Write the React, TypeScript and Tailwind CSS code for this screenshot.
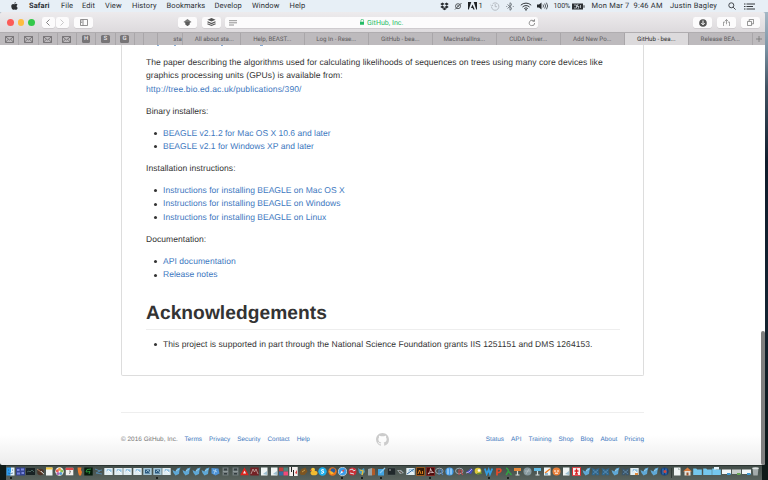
import React from "react";

const SANS = "font-['Liberation_Sans',Arial,sans-serif]";
const SYS = "font-[Roboto,'Liberation_Sans',sans-serif]";

function Apple() {
  return (
    <svg viewBox="0 0 16 18" className="h-[8px] w-[7px]" fill="#2c2f33">
      <path d="M11 0c.1 2-1.500 3.700-3.300 3.700C7.500 2 9.200.2 11 0zM8 5c.8 0 1.800-.9 3.500-.9 1.400 0 2.700.8 3.400 1.900-3 1.700-2.500 5.700.5 6.900-.7 2-2.300 4.800-4 4.800-1.200 0-1.600-.7-3-.7s-1.900.7-3 .7C3.300 17.700.6 13.500.6 9.600c0-3.600 2.300-5.400 4.400-5.400C6.400 4.200 7.400 5 8 5z" />
    </svg>
  );
}

const menus: [string, string][] = [
  ["Safari", "w-[32px] font-bold"],
  ["File", "w-[21px]"],
  ["Edit", "w-[23px]"],
  ["View", "w-[27px]"],
  ["History", "w-[34.500px]"],
  ["Bookmarks", "w-[48px]"],
  ["Develop", "w-[37.500px]"],
  ["Window", "w-[37.500px]"],
  ["Help", "w-[20px]"],
];

function MenuBar() {
  return (
    <div className={`flex h-[12px] w-[768px] shrink-0 items-center bg-[#e7eff6] text-[7.500px] leading-[12px] text-[#2c3035] ${SYS}`}>
      <div className="flex w-[29px] shrink-0 pl-[11px]"><Apple /></div>
      {menus.map(([t, c]) => <span key={t} className={`shrink-0 whitespace-nowrap tracking-[0.1px] ${c}`}>{t}</span>)}
      <div className="ml-auto flex shrink-0 items-center whitespace-nowrap">
        <svg viewBox="0 0 9 9" className="w-[9px]" fill="#25292d"><path d="M2.500.5L4.500 2 2.200 3.500.3 2zM6.500.5L8.700 2 6.800 3.500 4.500 2zM.3 5l1.900-1.500L4.500 5 2.500 6.400zM4.500 5l2.300-1.500L8.700 5 6.500 6.400zM2.500 7l2-1.400 2 1.400-2 1.300z" /></svg>
        <svg viewBox="0 0 8 8" className="ml-[5px] w-[8px]" fill="none" stroke="#33373b" strokeWidth=".8"><circle cx="4" cy="4.200" r="2.500" /><path d="M1 7.500L7.500 1M3 4h2" /></svg>
        <svg viewBox="0 0 9 8" className="ml-[6px] w-[9px]" fill="#1e2124"><path d="M0 0h3.300L.8 7.500H0zM5.700 0H9v7.500h-.8zM4.500 2.500l2.200 5H5.300l-.7-1.600H3z" /></svg>
        <span className="ml-[2px] w-[5px]">1</span>
        <svg viewBox="0 0 10 9" className="ml-[6px] w-[10px]" fill="none" stroke="#a9afb5" strokeWidth=".8"><path d="M1.500 5a3.700 3.700 0 1 0 1-3M.5 3l1.300 1.200L3 3M5.200 2v2.700h1.800" /></svg>
        <svg viewBox="0 0 8 9" className="ml-[6px] w-[8px]" fill="none" stroke="#5e666d" strokeWidth=".8"><path d="M1.500 2.500l4.500 4L4 8.300V.7L6 2.500l-4.500 4M.3 4.500h.9M6.800 4.500h.9" /></svg>
        <svg viewBox="0 0 12 9" className="ml-[6px] w-[12px]" fill="none" stroke="#34383c" strokeWidth="1"><path d="M.8 3.200a7.500 7.500 0 0 1 10.400 0M2.500 5a5 5 0 0 1 7 0M4.200 6.600a2.600 2.600 0 0 1 3.600 0" /><circle cx="6" cy="7.800" r=".5" /></svg>
        <svg viewBox="0 0 12 8" className="ml-[5px] w-[12px]"><path d="M0 2.500h2L4.500.5v7L2 5.500H0z" fill="#24282c" /><path d="M6 2.500q1 1.500 0 3M7.700 1.500q1.800 2.500 0 5M9.400.7q2.600 3.300 0 6.600" stroke="#30353a" fill="none" strokeWidth=".8" /></svg>
        <span className="ml-[5px] w-[17px] text-[7px] tracking-[-0.1px]">100%</span>
        <svg viewBox="0 0 13 7" className="ml-[1px] w-[13px]"><path d="M0 .5h11v6H0zM11.500 2.300h1v2.400h-1z" fill="#2c3034" /><path d="M2 2h2.500v3H2M6 1l-.8 2.500H7L6 6M8.500 2v3" stroke="#e7eff6" strokeWidth=".7" fill="none" /></svg>
        <span className="ml-[7px] w-[78.500px] tracking-[0.200px]">Mon Mar 7&nbsp; 9:46 AM</span>
        <span className="w-[49px] tracking-[0.180px]">Justin Bagley</span>
        <svg viewBox="0 0 8 8" className="ml-[9px] w-[8px]" fill="none" stroke="#33373b" strokeWidth=".9"><circle cx="3.300" cy="3.300" r="2.500" /><path d="M5.200 5.200L7.600 7.600" /></svg>
        <svg viewBox="0 0 11 7" className="ml-[8px] mr-[13px] w-[11px]" stroke="#34383d"><path d="M0 1h1.500M2.500 1H11M0 3.500h1.500M2.500 3.500H9M0 6h1.500M2.500 6H11" /></svg>
      </div>
    </div>
  );
}

function Btn({ c, children }: { c: string; children?: React.ReactNode }) {
  return <div className={`flex h-[11px] shrink-0 items-center justify-center rounded-[2px] bg-[#fcfbfc] shadow-[0_0.5px_0.5px_#bdbabd] ${c}`}>{children}</div>;
}

function Toolbar() {
  return (
    <div className="flex h-[20px] shrink-0 items-center bg-gradient-to-b from-[#edebed] to-[#dddadd] pt-[1px]">
      <div className="ml-[7px] size-[6.500px] rounded-full bg-[#fc5b57]" />
      <div className="ml-[4px] size-[6.500px] rounded-full bg-[#fdbc40]" />
      <div className="ml-[4px] size-[6.500px] rounded-full bg-[#34c84a]" />
      <Btn c="ml-[7px] w-[13px]"><svg viewBox="0 0 4 7" className="w-[4px]" fill="none" stroke="#666" strokeWidth=".8"><path d="M3.500.5l-3 3 3 3" /></svg></Btn>
      <Btn c="ml-[1px] w-[13px]"><svg viewBox="0 0 4 7" className="w-[4px]" fill="none" stroke="#bbb" strokeWidth=".8"><path d="M.5.5l3 3-3 3" /></svg></Btn>
      <Btn c="ml-[5.500px] w-[19px]"><svg viewBox="0 0 8 7" className="w-[8px]" fill="none" stroke="#777" strokeWidth=".8"><path d="M.5.5h7v6h-7zM3 .5v6M1.200 2h1M1.200 3.500h1" /></svg></Btn>
      <Btn c="ml-[84.500px] w-[19.500px]"><svg viewBox="0 0 10 8" className="w-[9px]" fill="#777"><path d="M5 0l4.500 3.300H.5z" /><path d="M.5 3.300h9L7.500 4.300V6L5 8 2.500 6V4.300z" fill="#5c5c5c" /></svg></Btn>
      <Btn c="ml-[4.500px] w-[19px]"><svg viewBox="0 0 10 9" className="w-[9px]"><path d="M5 0l4.500 2L5 4 .5 2z" fill="#555" /><path d="M.5 4.200l4.500 2 4.500-2M.5 6.300l4.500 2 4.500-2" fill="none" stroke="#555" strokeWidth="1.200" /></svg></Btn>
      <Btn c="ml-[4px] w-[313.500px] !justify-start">
        <svg viewBox="0 0 8 6" className="ml-[4px] w-[8px] shrink-0" stroke="#777" strokeWidth=".8"><path d="M0 .7h8M0 2.800h8M0 5h5" /></svg>
        <svg viewBox="0 0 5 7" className="ml-[123px] w-[4.500px] shrink-0" fill="#24bb65"><path d="M0 3h5v3.500H0z" /><path d="M1 3V1.800a1.500 1.500 0 0 1 3 0V3" fill="none" stroke="#24bb65" strokeWidth=".8" /></svg>
        <span className={`ml-[3px] shrink-0 whitespace-nowrap pt-[1px] text-[7px] leading-[11px] tracking-[0.040px] text-[#24bb65] ${SYS}`}>GitHub, Inc.</span>
        <svg viewBox="0 0 8 8" className="ml-auto mr-[2.500px] w-[8px]" fill="none" stroke="#777" strokeWidth=".8"><path d="M6.700 4a2.700 2.700 0 1 1-1.500-2.500L6.400 2M6.500.3V2.300H4.500" /></svg>
      </Btn>
      <Btn c="ml-[155px] w-[19px]"><svg viewBox="0 0 8 8" className="w-[8px]"><circle cx="4" cy="4" r="3.800" fill="#555" /><path d="M4 1.500v4M2.300 4L4 5.800 5.700 4" stroke="#fff" fill="none" /></svg></Btn>
      <Btn c="ml-[5px] w-[19px]"><svg viewBox="0 0 8 9" className="w-[7px]" fill="none" stroke="#777" strokeWidth=".8"><path d="M2.500 3.500h-2v5h7v-5h-2M4 6V.7M2.300 2.300L4 .6l1.700 1.700" /></svg></Btn>
      <Btn c="ml-[5px] w-[19px]"><svg viewBox="0 0 8 8" className="w-[7px]" fill="none" stroke="#777" strokeWidth=".9"><path d="M.5 2.800h4.700v4.700H.5zM2.500 2.500V.5h5v5h-2" /></svg></Btn>
    </div>
  );
}

const tabs: [string, string][] = [
  ["All about sta...", "w-[58px] pl-[6px]"],
  ["Help, BEAST...", "w-[64px]"],
  ["Log In - Rese...", "w-[64px]"],
  ["GitHub - bea...", "w-[64px]"],
  ["MacInstallIns...", "w-[64px]"],
  ["CUDA Driver...", "w-[64px]"],
  ["Add New Po...", "w-[64px]"],
  ["GitHub - bea...", "w-[64px] bg-[#dcdadc] !text-[#2f2f2f]"],
  ["Release BEA...", "w-[64px]"],
];

function Tabs() {
  const pin = "flex h-full shrink-0 items-center justify-center border-r border-[#a9a6a9]";
  return (
    <div className={`flex h-[13px] shrink-0 items-center border-t border-[#b0adb0] bg-[#bdbabd] text-[6.200px] leading-[12px] text-[#5e5c5e] ${SYS}`}>
      {[0, 1, 2, 3].map((i) => (
        <div key={i} className={`${pin} w-[19.250px]`}>
          <svg viewBox="0 0 9 7" className="w-[9px]" fill="none" stroke="#686668" strokeWidth=".8"><path d="M.5.5h8v6h-8zM.5.700l4 3.300 4-3.300M.5 6.300l2.700-3M8.500 6.300l-2.700-3" /></svg>
        </div>
      ))}
      {["H", "S", "G"].map((l) => (
        <div key={l} className={`${pin} w-[19.250px]`}>
          <span className="flex size-[8.500px] items-center justify-center rounded-[1.500px] bg-[#777577] text-[6px] font-bold text-[#dddadd]">{l}</span>
        </div>
      ))}
      <div className={`${pin} w-[9.500px]`} />
      <div className={`${pin} w-[14px]`} />
      <div className={`${pin} w-[24.500px] !justify-start overflow-hidden pl-[15px]`}>sta</div>
      {tabs.map(([t, c], i) => <div key={i} className={`${pin} whitespace-nowrap tracking-[-0.02px] ${c}`}>{t}</div>)}
      <div className="flex flex-1 justify-center"><svg viewBox="0 0 6 6" className="w-[6px]" stroke="#777" strokeWidth=".8"><path d="M3 0v6M0 3h6" /></svg></div>
    </div>
  );
}

function Links({ items }: { items: [string, string][] }) {
  return (
    <ul className="mb-[8.400px] pl-[17px]">
      {items.map(([t, c]) => (
        <li key={t} className={`relative w-fit whitespace-nowrap ${c}`}>
          <span className="absolute left-[-9.500px] top-[5.300px] size-[3px] rounded-full bg-[#333]" />
          {t}
        </li>
      ))}
    </ul>
  );
}

const blue = "text-[#4078c0]";
const blueWide = "text-[#4078c0] tracking-[0.020px]";

function Page() {
  return (
    <div className={`flex h-[420px] shrink-0 flex-col bg-[linear-gradient(#fff_390px,#ececec_420px)] ${SANS}`}>
      <div className="ml-[121px] h-[331px] w-[523px] shrink-0 rounded-b-[2px] border border-t-0 border-[#ddd] pl-[24px] pr-[23px] text-[8.530px] leading-[13.500px] text-[#333]">
        <div className="flex h-[10.900px] items-start gap-[15px] pl-[11px]">
          <i className="h-px w-[2px] bg-[#8cafd8]" /><i className="h-px w-[2px] bg-[#8cafd8]" /><i className="ml-[30px] h-px w-[2px] bg-[#8cafd8]" /><i className="ml-[22px] h-px w-[3px] bg-[#8cafd8]" />
        </div>
        <p className="mb-[8.400px] whitespace-nowrap tracking-[0.047px]">
          The paper describing the algorithms used for calculating likelihoods of sequences on trees using many core devices like<br />
          <span className="tracking-[0.070px]">graphics processing units (GPUs) is available from:</span><br />
          <span className="tracking-[0.120px] text-[#4078c0]">http://tree.bio.ed.ac.uk/publications/390/</span>
        </p>
        <p className="mb-[8.400px]">Binary installers:</p>
        <Links items={[["BEAGLE v2.1.2 for Mac OS X 10.6 and later", blue], ["BEAGLE v2.1 for Windows XP and later", blue]]} />
        <p className="mb-[8.400px] tracking-[0.040px]">Installation instructions:</p>
        <Links items={[["Instructions for installing BEAGLE on Mac OS X", blueWide], ["Instructions for installing BEAGLE on Windows", blueWide], ["Instructions for installing BEAGLE on Linux", blueWide]]} />
        <p className="mb-[8.400px] tracking-[0.040px]">Documentation:</p>
        <Links items={[["API documentation", "text-[#4078c0] tracking-[0.050px]"], ["Release notes", blue]]} />
        <h1 className="mb-[8.300px] mt-[18.800px] h-[29px] border-b border-[#eee] pt-[1px] text-[19.200px] font-bold leading-[24px] tracking-[0.050px]">Acknowledgements</h1>
        <Links items={[["This project is supported in part through the National Science Foundation grants IIS 1251151 and DMS 1264153.", "tracking-[0.041px]"]]} />
      </div>
      <div className="ml-[121px] mt-[36px] flex h-[54px] w-[523px] shrink-0 items-center border-t border-[#eee] text-[6.400px] leading-[10px] tracking-[0.025px] text-[#4078c0]">
        <span className="w-[63.500px] whitespace-nowrap text-[#767676]">© 2016 GitHub, Inc.</span>
        <div className="flex w-[191.500px] gap-[7px]">{["Terms", "Privacy", "Security", "Contact", "Help"].map((t) => <span key={t}>{t}</span>)}</div>
        <svg viewBox="0 0 16 16" className="size-[13px]" fill="#ccc"><path d="M8 0C3.580 0 0 3.580 0 8c0 3.540 2.290 6.530 5.470 7.590.4.070.55-.17.55-.38 0-.19-.01-.82-.01-1.490-2.010.37-2.530-.49-2.690-.94-.09-.23-.48-.94-.82-1.130-.28-.15-.68-.52-.01-.53.63-.01 1.080.58 1.230.82.72 1.210 1.870.87 2.330.66.070-.52.28-.87.51-1.070-1.780-.2-3.640-.89-3.640-3.950 0-.87.31-1.590.82-2.150-.08-.2-.36-1.020.08-2.120 0 0 .67-.21 2.200.82.64-.18 1.320-.27 2-.27s1.360.09 2 .27c1.530-1.040 2.200-.82 2.200-.82.44 1.100.16 1.920.08 2.120.51.56.82 1.270.82 2.150 0 3.070-1.870 3.750-3.650 3.950.29.25.54.73.54 1.480 0 1.070-.01 1.930-.01 2.200 0 .21.15.46.55.38A8.010 8.010 0 0 0 16 8c0-4.420-3.580-8-8-8z" /></svg>
        <div className="ml-auto flex gap-[7px]">{["Status", "API", "Training", "Shop", "Blog", "About", "Pricing"].map((t) => <span key={t}>{t}</span>)}</div>
      </div>
    </div>
  );
}

const apps = "finder grid term tool note wheel cal wizard hacker wire mail mail mail mail dmail dmail mail bird bird bird bird blueapp cube cube tri red page page quad piano brown duck skype fox compass redball blueyellow book bluetool term2 fish card ai pdf r globe r2 violet bug word ppt lambda podium ball podiumb pencil clown page cross bird fly fly bird darkfly omail bird bird globe2 sep doc home folder folder folder2 win wing win trash".split(" ");
const running = new Set([0, 15, 34, 36, 38, 43, 49, 51]);

function Glyph({ k }: { k: string }) {
  switch (k) {
    case "finder": return <><path d="M.5.5h4.500v8H.5z" fill="#2c9cf0" /><path d="M5 .5h3.500v8H4.500l-.3-3H5z" fill="#e3f2fb" /><path d="M2.500 2.500v1.200M6.500 2.500v1.200M2 6q2.500 1.300 5 0" stroke="#1c4c78" strokeWidth=".6" fill="none" /></>;
    case "grid": return <><path d="M0 .5h9v8H0z" fill="#344493" /><path d="M1 2h2.500v2H1zM5 1.500h3v2H5zM1 5.500h3v2H1zM5.500 5h2.500v2H5.500z" fill="#7987dc" /></>;
    case "term": return <><path d="M0 1h9v7H0z" fill="#182224" /><path d="M1 5l2-1 1 1 2-2 2 2" stroke="#54706b" strokeWidth=".8" fill="none" /></>;
    case "term2": return <><path d="M.5 1h8v7h-8z" fill="#20282b" stroke="#63696b" strokeWidth=".4" /><path d="M2 3h2" stroke="#aaa" /></>;
    case "tool": return <><circle cx="4.500" cy="5" r="3.300" fill="#4c352a" /><path d="M1 2l7 5" stroke="#ad8060" /><path d="M5 4l3 3" stroke="#b9c3c6" /></>;
    case "note": case "page": case "doc": case "pencil": return <><path d="M1 .5h6.500v8H1z" fill="#eff4f3" />{k === "note" && <path d="M1 .5h6.500v2H1z" fill="#f2c941" />}{k === "page" && <path d="M3 7l4-3v4z" fill="#9fc0d0" />}{k === "pencil" && <><path d="M2 6l5-4" stroke="#f07c21" strokeWidth="1.500" /><path d="M2 7h3" stroke="#3d85b5" /></>}{k === "doc" && <path d="M5 .5l2.500 2.500H5z" fill="#b7c0bf" />}</>;
    case "wheel": return <><circle cx="4.500" cy="4.500" r="4.200" fill="#f5f5ef" /><circle cx="4.500" cy="2.200" r="1.500" fill="#f4a33c" /><circle cx="6.700" cy="4" r="1.500" fill="#8ac153" /><circle cx="5.700" cy="6.500" r="1.500" fill="#559ed3" /><circle cx="3" cy="6.400" r="1.500" fill="#ac69b5" /><circle cx="2.300" cy="3.800" r="1.500" fill="#ed5b55" /></>;
    case "cal": return <><path d="M.8.8h7.500v7.500H.8z" fill="#f3f1ef" /><path d="M.8.8h7.500v2.200H.8z" fill="#df4b4c" /><path d="M4 4h1.500L4.500 7" stroke="#555" fill="none" strokeWidth=".7" /></>;
    case "wizard": return <path d="M2.500.5h4L6 3l1 2-1 3.500H4L3 5z" fill="#eb7b2d" />;
    case "hacker": return <><path d="M.3.5h8.400v8H.3z" fill="#071b0c" /><path d="M7 2L3 2.500 2 5l4-.5L5 7" stroke="#27913b" fill="none" /></>;
    case "wire": return <path d="M1 2l5 2-4 2 6 1M4 4l4-1" stroke="#5585a8" fill="none" />;
    case "mail": case "omail": case "card": return <><path d="M.3 1h8.400v7H.3z" fill="#e2eef2" /><path d="M2 6.500l2.500-3 3 2V2.500L3 2z" fill="#8fc0e0" /><path d="M1.500 6l3-2.500L7 6" stroke="#fff" strokeWidth=".8" fill="none" />{k === "omail" && <path d="M5 6h3v2H5z" fill="#e28b3d" />}{k === "card" && <path d="M1 7l7-5" stroke="#34699e" />}</>;
    case "dmail": return <><path d="M.3 1h8.400v7H.3z" fill="#a5c6d6" /><path d="M2 2.500h5v4H2z" fill="#2c5b80" /><path d="M3 5l2-2 2 3" stroke="#bfe0ed" strokeWidth=".7" fill="none" /></>;
    case "bird": return <><path d="M.5 3l2.800 1.500L5 1.500 8.500.5 7.500 3.500 7 7 3.500 8.500 1.500 6z" fill="#5fa8d6" /><path d="M4 4l3-2" stroke="#b3ddf3" strokeWidth=".7" /></>;
    case "blueapp": return <><path d="M.5 1l7 .5 1 5-4 2-4-2z" fill="#4d92d6" /><path d="M2 3l4 2M5 2L3 7" stroke="#c6e3f5" strokeWidth=".7" /></>;
    case "cube": return <><path d="M1.500.5h6v8h-6z" fill="#737c7e" /><path d="M3 1.500h3v2H3zM3 6h3v1.500H3z" fill="#333e40" /><path d="M2 4.500h5" stroke="#abb6b6" strokeWidth=".5" /></>;
    case "tri": return <><path d="M4.500.3l4.300 8H.2z" fill="#dc241d" /><path d="M4.500 3.500l1.600 3H3z" fill="#eee" /></>;
    case "red": return <><path d="M.3.5h8.400v8H.3z" fill="#742125" /><path d="M1 7l2-5 1.500 3L6 2l2 5" stroke="#c3aaa4" fill="none" strokeWidth=".8" /></>;
    case "quad": return <><path d="M0 .5h4.500v4H0z" fill="#c43f3d" /><path d="M4.500.5H9v4H4.500z" fill="#52837d" /><path d="M0 4.500h4.500v4H0z" fill="#376da2" /><path d="M4.500 4.500H9v4H4.500z" fill="#ef4b78" /></>;
    case "piano": return <><path d="M.3 0h8.400v9H.3z" fill="#f2efed" /><path d="M2.500 0v5M4.500 3v6" stroke="#222" /><path d="M6 6l2-3v4z" fill="#df4242" /></>;
    case "brown": return <><path d="M.5 6l2-4 4-1.500 2 4L5.500 8H2z" fill="#7d5521" /><path d="M3 5l3-2" stroke="#c69a47" /></>;
    case "duck": return <><circle cx="4" cy="2.700" r="2" fill="#f7c83d" /><ellipse cx="5" cy="6" rx="3.500" ry="2.300" fill="#f2ba30" /><path d="M1 3.300h2" stroke="#e76720" /></>;
    case "skype": return <><circle cx="4.500" cy="4.500" r="4.200" fill="#20aeea" /><path d="M6 3Q3 1.800 3.300 3.700L6 5Q5.500 7 3 6" stroke="#fff" fill="none" /></>;
    case "fox": return <><circle cx="4.500" cy="4.500" r="4.200" fill="#e8731c" /><circle cx="5" cy="3.500" r="2.300" fill="#285fa0" /><path d="M1 4l3 .5 2 2-3 1z" fill="#f7b52e" /></>;
    case "compass": return <><circle cx="4.500" cy="4.500" r="4.100" fill="#399eec" stroke="#dce7ed" strokeWidth=".7" /><path d="M7 2L5.200 5.300 3.700 3.700z" fill="#ef4a3f" /><path d="M2 7l1.700-3.300 1.500 1.600z" fill="#fff" /></>;
    case "redball": return <><circle cx="4.500" cy="4.500" r="4" fill="#c92f36" /><path d="M1.500 3l3-1 1 2 2-1M2 6l4 1" stroke="#d6e5e8" fill="none" /></>;
    case "blueyellow": return <><path d="M1 1l3 2 3-2 1 4-3 3-3-2z" fill="#4698bf" /><path d="M3 3l3 1-1 4" stroke="#e8bd37" strokeWidth="1.300" fill="none" /></>;
    case "book": return <><path d="M1 2l4-1v7.500H1z" fill="#9aa4a6" /><path d="M5 1l3 .7V8l-3 .5z" fill="#b25b28" /></>;
    case "bluetool": return <><path d="M1 2h6v6.500H1z" fill="#42a4e2" /><path d="M3 6l5-5" stroke="#8ccbee" strokeWidth="1.300" /></>;
    case "fish": return <><path d="M1 3l4 0 3 3-4 1z" fill="#9ba6a7" /><path d="M3 4l3 2" stroke="#594a42" /></>;
    case "ai": case "pdf": return <><path d="M.5.5h8v8h-8z" fill={k === "ai" ? "#351b07" : "#4b0b0b"} stroke={k === "ai" ? "#b86419" : "#912522"} strokeWidth=".7" />{k === "ai" ? <path d="M2 7l1.500-4L5 7M6.500 4v3" stroke="#f08c21" fill="none" strokeWidth=".9" /> : <path d="M2 7q3-3 2.500-5.500Q5 5 7.500 5.500 4 5 2 7z" stroke="#f2e7e6" fill="none" strokeWidth=".7" />}</>;
    case "r": case "r2": return <><ellipse cx="4.300" cy="4" rx="3.800" ry="2.800" fill="none" stroke="#9ba6af" /><path d="M4 8V3h2q2 1.200 0 2.500L8 8" stroke={k === "r" ? "#5481b5" : "#b94c50"} fill="none" strokeWidth="1.200" /></>;
    case "globe": case "globe2": return <><circle cx="4.500" cy="4.500" r="4.100" fill={k === "globe" ? "#439ae6" : "#163f79"} /><path d="M3 1.500v6M6 1.500v6" stroke={k === "globe" ? "#d5edfb" : "#4686c8"} />{k === "globe2" && <circle cx="5" cy="4.500" r="1.500" fill="#cf493f" />}</>;
    case "violet": return <><path d="M1 5l3-2 2-2 2 2-2 4-3-1z" fill="#454fc2" /><path d="M1 6l3-1 3-3" stroke="#b8abdf" fill="none" /></>;
    case "bug": return <><circle cx="4" cy="4" r="3.300" fill="#dac63b" /><circle cx="5" cy="3.500" r="1.300" fill="#fff" /><path d="M3 7l5-1" stroke="#658b37" strokeWidth="1.400" /></>;
    case "word": return <path d="M.8 1.500L2.700 7l2-4.500L6 7l2.300-5.500" stroke="#329de2" strokeWidth="1.800" fill="none" />;
    case "ppt": return <path d="M3 8.500V2h3q2.300 2-1 3.500H3" stroke="#e74a28" strokeWidth="1.700" fill="none" />;
    case "lambda": return <path d="M2 1.200q2 0 2.500 3L7.500 8M4.500 4L2 8" stroke="#34a044" strokeWidth="1.500" fill="none" />;
    case "podium": case "podiumb": return <><path d="M1 1h7v3H1z" fill={k === "podium" ? "#e78839" : "#5fbbe5"} /><path d="M4.500 4v4M2.500 8h4" stroke="#d7dfdd" strokeWidth="1.200" /></>;
    case "ball": return <><circle cx="4.500" cy="4.500" r="4" fill="#87999e" /><path d="M2 4h5M3 7l3-5" stroke="#bac6c8" strokeWidth=".7" /></>;
    case "clown": return <><circle cx="4.500" cy="4.500" r="4" fill="#e9803a" /><path d="M2 4h2M5 4h2M3 6.200h3" stroke="#fff" /></>;
    case "cross": return <><path d="M.5.3h8v8.400h-8z" fill="#f4eeee" stroke="#d92d31" /><path d="M4.500 1.500v5M2.500 4h4M3 7h3" stroke="#db2023" strokeWidth="1.300" /></>;
    case "fly": case "darkfly": return <><path d="M.5 1l3 1 1 1 1-1 3-1-1 3 .8 4-2.800.5-1-2-1 2L.7 8l.8-4z" fill={k === "fly" ? "#2f678f" : "#3a556b"} /><path d="M2 3l5 4M7 3L2 7" stroke="#6f9cbc" strokeWidth=".6" /></>;
    case "home": return <><path d="M0 4.500L4.500.5 9 4.500z" fill="#d97a3b" /><path d="M1.500 4h6v4.500h-6z" fill="#e5e2d9" /><path d="M3.500 5.500h2v3h-2z" fill="#9d552e" /></>;
    case "folder": case "folder2": return <><path d="M.2 1.500h3l1 1h4.600V8H.2z" fill="#75c8ee" />{k === "folder2" && <path d="M2 0h5v2.500H2z" fill="#e2f2f8" />}</>;
    case "win": case "wing": return <><path d="M0 2.500h9V7H0z" fill={k === "win" ? "#f2f6f7" : "#c9cecd"} /><path d="M5 6h3.500v2H5z" fill={k === "win" ? "#3f98cf" : "#66a657"} /></>;
    default: return <><path d="M1.500 1h6l-.8 7.500H2.300z" fill="#a3abab" /><ellipse cx="4.500" cy="1.300" rx="3.300" ry="1" fill="#dbe0df" /></>;
  }
}

function Dock() {
  return (
    <div className="flex h-[15px] w-[768px] shrink-0 bg-[#101b19] pl-[6px] pr-[6px]">
      <div className="flex flex-1 border-t border-[#2c3532] bg-gradient-to-b from-[#424d49] to-[#59635e]">
        {apps.map((k, i) => k === "sep"
          ? <div key={i} className="mx-[1.500px] mt-[2px] h-[10px] w-px shrink-0 bg-[#303a37]" />
          : <div key={i} className="flex w-[9.750px] shrink-0 flex-col items-center pt-[1px]">
              <svg viewBox="0 0 9 9" className="size-[9px] shrink-0"><Glyph k={k} /></svg>
              {running.has(i) && <i className="mt-[1px] size-[2px] rounded-full bg-[#0b0f0e]" />}
            </div>)}
      </div>
    </div>
  );
}

export default function App() {
  return (
    <div className="flex h-[480px] w-[768px] flex-col overflow-hidden bg-[#101b19] [text-rendering:geometricPrecision]">
      <MenuBar />
      <div className="relative flex h-[453px] shrink-0 bg-[linear-gradient(#a4b7c5,#7e95a6_35px,#425363_75px,#101c2b_150px,#142331_300px,#0b1717)]">
        <div className="w-[765px] overflow-hidden rounded-t-[2px] rounded-b-[2px]">
          <Toolbar />
          <Tabs />
          <Page />
        </div>
        <div className="absolute left-[760.500px] top-[318.500px] h-[134px] w-[4px] rounded-full bg-[#808080]" />
      </div>
      <Dock />
    </div>
  );
}
